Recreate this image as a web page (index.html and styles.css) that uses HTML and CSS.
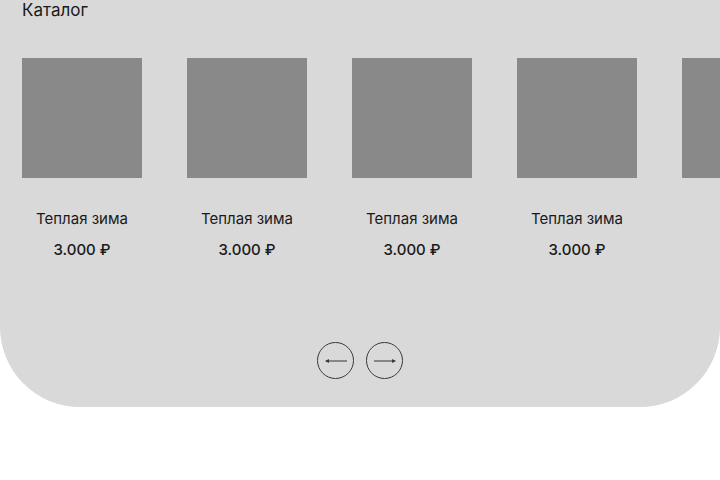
FILE: index.html
```html
<!DOCTYPE html>
<html lang="ru">
<head>
    <meta charset="UTF-8">
    <meta name="viewport" content="width=device-width, initial-scale=1.0">
    <title>Каталог</title>
    <link rel="stylesheet" href="styles.css">
</head>
<body>
    <section class="catalog">
        <h2 class="catalog-title">Каталог</h2>

        <div class="catalog-track">
            <div class="product">
                <div class="product-photo"></div>
                <div class="product-name">Теплая зима</div>
                <div class="product-price">3.000 ₽</div>
            </div>
            <div class="product">
                <div class="product-photo"></div>
                <div class="product-name">Теплая зима</div>
                <div class="product-price">3.000 ₽</div>
            </div>
            <div class="product">
                <div class="product-photo"></div>
                <div class="product-name">Теплая зима</div>
                <div class="product-price">3.000 ₽</div>
            </div>
            <div class="product">
                <div class="product-photo"></div>
                <div class="product-name">Теплая зима</div>
                <div class="product-price">3.000 ₽</div>
            </div>
            <div class="product">
                <div class="product-photo"></div>
            </div>
        </div>

        <div class="catalog-nav">
            <button class="nav-btn" aria-label="Назад">
                <svg width="24" height="8" viewBox="0 0 24 8">
                    <line x1="2" y1="4" x2="23" y2="4" />
                    <path d="M1 4 L5 2 L5 6 Z" />
                </svg>
            </button>
            <button class="nav-btn" aria-label="Вперед">
                <svg width="24" height="8" viewBox="0 0 24 8">
                    <line x1="1" y1="4" x2="22" y2="4" />
                    <path d="M23 4 L19 2 L19 6 Z" />
                </svg>
            </button>
        </div>
    </section>
</body>
</html>
```

FILE: styles.css
```css
body {
    margin: 0;
    background-color: #fff;
    font-family: Inter, "Noto Sans", sans-serif;
    color: #1a1a1a;
}

.catalog {
    background-color: #d9d9d9;
    height: 407px;
    border-radius: 0 0 80px 80px;
    overflow: hidden;
    box-sizing: border-box;
    padding-left: 22px;
}

.catalog-title {
    margin: 0;
    font-size: 17px;
    font-weight: 400;
    line-height: 20px;
}

/* Product slider row */
.catalog-track {
    display: flex;
    align-items: flex-start;
    gap: 45px;
    margin-top: 38px;
}

.product {
    flex: 0 0 120px;
    text-align: center;
}

.product-photo {
    width: 120px;
    height: 120px;
    background-color: #898989;
}

.product-name {
    margin-top: 31px;
    font-size: 15px;
    line-height: 20px;
}

.product-price {
    margin-top: 11px;
    font-size: 15px;
    font-weight: 500;
    line-height: 20px;
}

/* Prev / next buttons */
.catalog-nav {
    display: flex;
    justify-content: center;
    gap: 12px;
    margin-top: 82px;
    margin-left: -22px;
}

.nav-btn {
    width: 37px;
    height: 37px;
    padding: 0;
    border: 1px solid #3a3a3a;
    border-radius: 50%;
    background: transparent;
    display: flex;
    align-items: center;
    justify-content: center;
    cursor: pointer;
}

.nav-btn line {
    stroke: #6a6a6a;
    stroke-width: 1.5;
}

.nav-btn path {
    fill: #3a3a3a;
}
```
